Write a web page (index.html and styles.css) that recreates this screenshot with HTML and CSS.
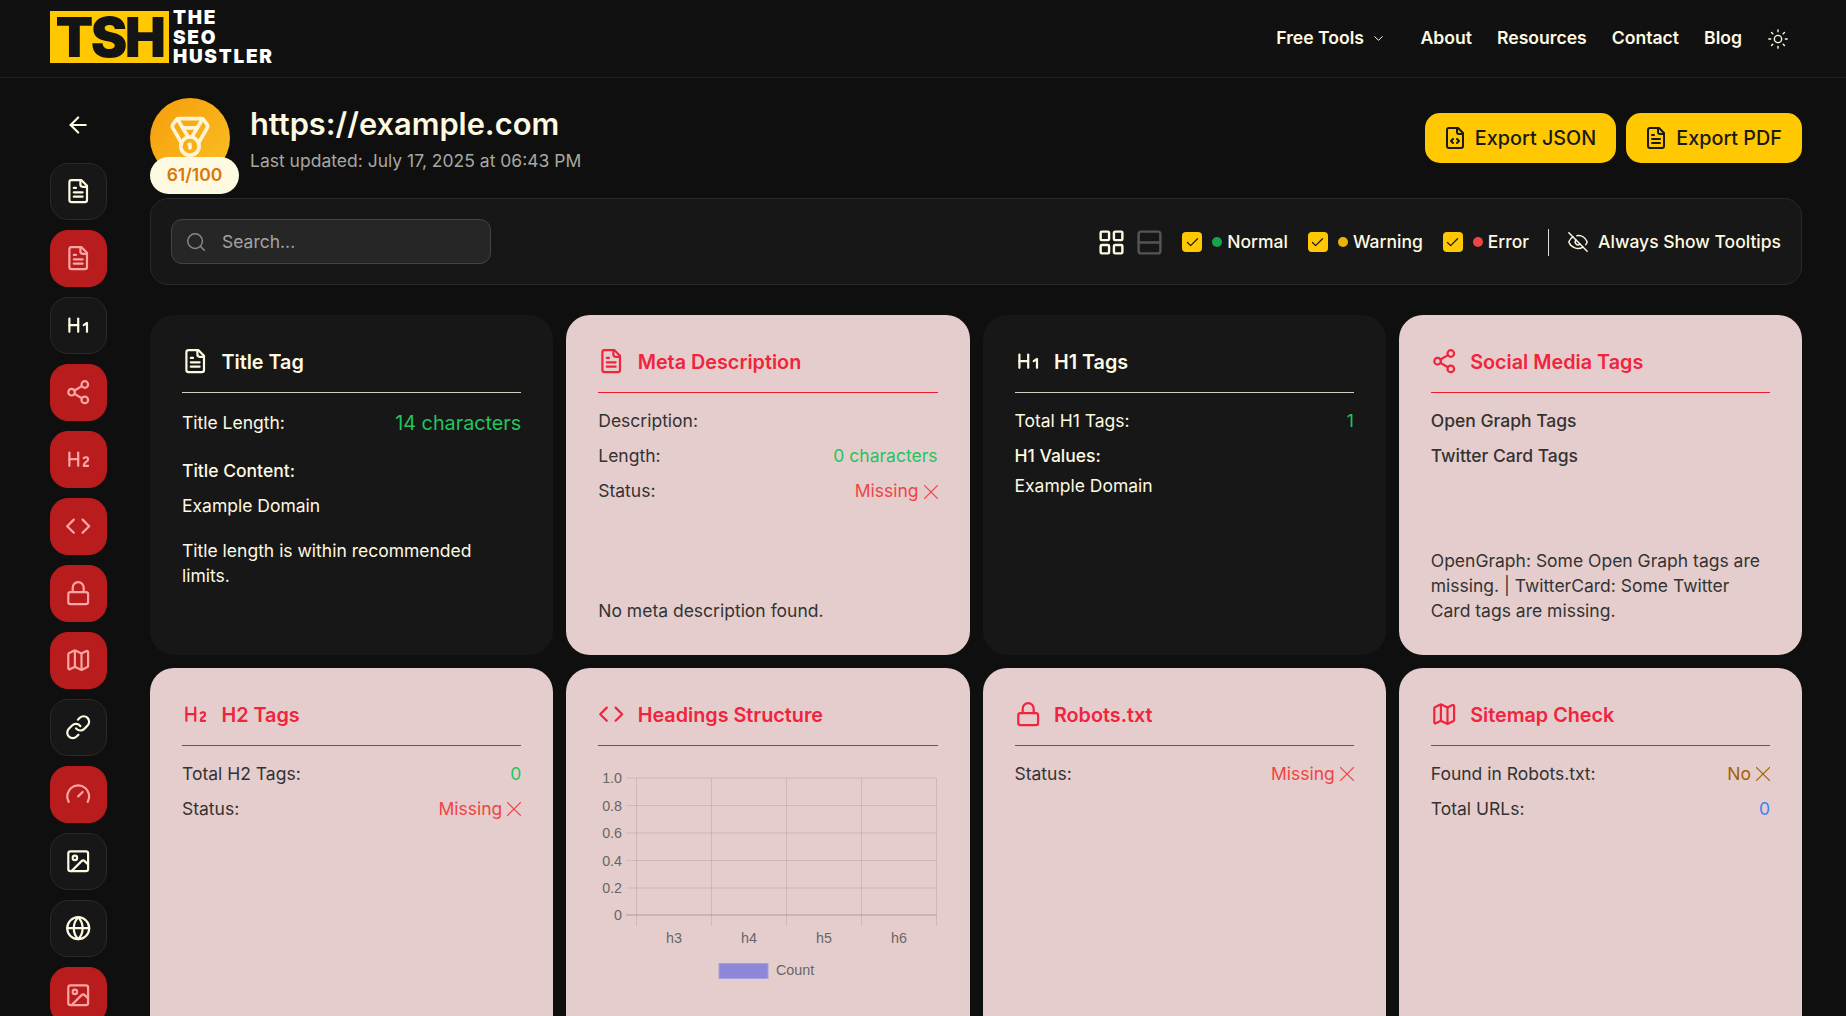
FILE: index.html
```html
<!DOCTYPE html>
<html lang="en">
<head>
  <meta charset="UTF-8">
  <meta name="viewport" content="width=device-width, initial-scale=1.0">
  <title>SEO Report - The SEO Hustler</title>
  <link rel="stylesheet" href="styles.css">
</head>
<body>
  <!-- Icon sprite -->
  <svg class="sprite" xmlns="http://www.w3.org/2000/svg">
    <symbol id="i-file" viewBox="0 0 24 24"><path d="M15 2H6a2 2 0 0 0-2 2v16a2 2 0 0 0 2 2h12a2 2 0 0 0 2-2V7Z"/><path d="M14 2v4a2 2 0 0 0 2 2h4"/><path d="M10 9H8"/><path d="M16 13H8"/><path d="M16 17H8"/></symbol>
    <symbol id="i-file-code" viewBox="0 0 24 24"><path d="M15 2H6a2 2 0 0 0-2 2v16a2 2 0 0 0 2 2h12a2 2 0 0 0 2-2V7Z"/><path d="M14 2v4a2 2 0 0 0 2 2h4"/><path d="m10 13-2 2 2 2"/><path d="m14 17 2-2-2-2"/></symbol>
    <symbol id="i-h1" viewBox="0 0 24 24"><path d="M4 12h8"/><path d="M4 18V6"/><path d="M12 18V6"/><path d="m17 12 3-2v8"/></symbol>
    <symbol id="i-h2" viewBox="0 0 24 24"><path d="M4 12h8"/><path d="M4 18V6"/><path d="M12 18V6"/><path d="M21 18h-4c0-4 4-3 4-6 0-1.5-2-2.5-4-1"/></symbol>
    <symbol id="i-share" viewBox="0 0 24 24"><circle cx="18" cy="5" r="3"/><circle cx="6" cy="12" r="3"/><circle cx="18" cy="19" r="3"/><path d="m8.59 13.51 6.83 3.98"/><path d="m15.41 6.51-6.82 3.98"/></symbol>
    <symbol id="i-code" viewBox="0 0 24 24"><path d="m16 18 6-6-6-6"/><path d="m8 6-6 6 6 6"/></symbol>
    <symbol id="i-lock" viewBox="0 0 24 24"><rect x="3" y="11" width="18" height="11" rx="2"/><path d="M7 11V7a5 5 0 0 1 10 0v4"/></symbol>
    <symbol id="i-map" viewBox="0 0 24 24"><path d="M14.106 5.553a2 2 0 0 0 1.788 0l3.659-1.83A1 1 0 0 1 21 4.619v12.764a1 1 0 0 1-.553.894l-4.553 2.277a2 2 0 0 1-1.788 0l-4.212-2.106a2 2 0 0 0-1.788 0l-3.659 1.83A1 1 0 0 1 3 19.381V6.618a1 1 0 0 1 .553-.894l4.553-2.277a2 2 0 0 1 1.788 0z"/><path d="M15 5.764v15"/><path d="M9 3.236v15"/></symbol>
    <symbol id="i-link" viewBox="0 0 24 24"><path d="M10 13a5 5 0 0 0 7.54.54l3-3a5 5 0 0 0-7.07-7.07l-1.72 1.71"/><path d="M14 11a5 5 0 0 0-7.54-.54l-3 3a5 5 0 0 0 7.07 7.07l1.71-1.71"/></symbol>
    <symbol id="i-gauge" viewBox="0 0 24 24"><path d="m12 14 4-4"/><path d="M3.34 19a10 10 0 1 1 17.32 0"/></symbol>
    <symbol id="i-image" viewBox="0 0 24 24"><rect x="3" y="3" width="18" height="18" rx="2"/><circle cx="9" cy="9" r="2"/><path d="m21 15-3.086-3.086a2 2 0 0 0-2.828 0L6 21"/></symbol>
    <symbol id="i-globe" viewBox="0 0 24 24"><circle cx="12" cy="12" r="10"/><path d="M12 2a14.5 14.5 0 0 0 0 20 14.5 14.5 0 0 0 0-20"/><path d="M2 12h20"/></symbol>
    <symbol id="i-x" viewBox="0 0 24 24"><path d="M23 1 1 23"/><path d="m1 1 22 22"/></symbol>
    <symbol id="i-check" viewBox="0 0 24 24"><path d="M20 6 9 17l-5-5"/></symbol>
  </svg>

  <!-- Header -->
  <header class="site-header">
    <a class="logo" href="#">
      <span class="logo-mark">TSH</span>
      <span class="logo-name">THE<br>SEO<br>HUSTLER</span>
    </a>
    <nav class="site-nav">
      <a class="nav-tools" href="#">Free Tools
        <svg class="icon chevron" viewBox="0 0 24 24"><path d="m6 9 6 6 6-6"/></svg>
      </a>
      <a href="#">About</a>
      <a href="#">Resources</a>
      <a href="#">Contact</a>
      <a href="#">Blog</a>
      <svg class="icon sun" viewBox="0 0 24 24"><circle cx="12" cy="12" r="4"/><path d="M12 2v2"/><path d="M12 20v2"/><path d="m4.93 4.93 1.41 1.41"/><path d="m17.66 17.66 1.41 1.41"/><path d="M2 12h2"/><path d="M20 12h2"/><path d="m6.34 17.66-1.41 1.41"/><path d="m19.07 4.93-1.41 1.41"/></svg>
    </nav>
  </header>

  <div class="page">
    <!-- Sidebar -->
    <aside class="sidebar">
      <svg class="icon back" viewBox="0 0 24 24"><path d="m12 19-7-7 7-7"/><path d="M19 12H5"/></svg>
      <a class="side-btn" href="#"><svg class="icon"><use href="#i-file"/></svg></a>
      <a class="side-btn fail" href="#"><svg class="icon"><use href="#i-file"/></svg></a>
      <a class="side-btn" href="#"><svg class="icon"><use href="#i-h1"/></svg></a>
      <a class="side-btn fail" href="#"><svg class="icon"><use href="#i-share"/></svg></a>
      <a class="side-btn fail" href="#"><svg class="icon"><use href="#i-h2"/></svg></a>
      <a class="side-btn fail" href="#"><svg class="icon"><use href="#i-code"/></svg></a>
      <a class="side-btn fail" href="#"><svg class="icon"><use href="#i-lock"/></svg></a>
      <a class="side-btn fail" href="#"><svg class="icon"><use href="#i-map"/></svg></a>
      <a class="side-btn" href="#"><svg class="icon"><use href="#i-link"/></svg></a>
      <a class="side-btn fail" href="#"><svg class="icon"><use href="#i-gauge"/></svg></a>
      <a class="side-btn" href="#"><svg class="icon"><use href="#i-image"/></svg></a>
      <a class="side-btn" href="#"><svg class="icon"><use href="#i-globe"/></svg></a>
      <a class="side-btn fail" href="#"><svg class="icon"><use href="#i-image"/></svg></a>
    </aside>

    <main class="report">
      <!-- Report title -->
      <section class="report-head">
        <div class="score">
          <div class="score-circle">
            <svg class="icon" viewBox="0 0 24 24"><path d="M7.21 15 2.66 7.14a2 2 0 0 1 .13-2.2L4.4 2.8A2 2 0 0 1 6 2h12a2 2 0 0 1 1.6.8l1.6 2.14a2 2 0 0 1 .14 2.2L16.79 15"/><path d="M11 12 5.12 2.2"/><path d="m13 12 5.88-9.8"/><path d="M8 7h8"/><circle cx="12" cy="17" r="5"/><path d="M12 18v-2h-.5"/></svg>
          </div>
          <span class="score-pill">61/100</span>
        </div>
        <div class="report-title">
          <h1>https://example.com</h1>
          <p>Last updated: July 17, 2025 at 06:43 PM</p>
        </div>
        <div class="export">
          <button class="export-btn"><svg class="icon"><use href="#i-file-code"/></svg>Export JSON</button>
          <button class="export-btn"><svg class="icon"><use href="#i-file"/></svg>Export PDF</button>
        </div>
      </section>

      <!-- Toolbar -->
      <section class="toolbar">
        <label class="search">
          <svg class="icon" viewBox="0 0 24 24"><circle cx="11" cy="11" r="8"/><path d="m21 21-4.3-4.3"/></svg>
          <input type="text" placeholder="Search...">
        </label>
        <div class="controls">
          <svg class="icon view" viewBox="0 0 24 24"><rect x="3" y="3" width="7" height="7" rx="1"/><rect x="14" y="3" width="7" height="7" rx="1"/><rect x="14" y="14" width="7" height="7" rx="1"/><rect x="3" y="14" width="7" height="7" rx="1"/></svg>
          <svg class="icon view off" viewBox="0 0 24 24"><rect x="3" y="3" width="18" height="18" rx="2"/><path d="M3 12h18"/></svg>
          <span class="filter first"><span class="check"><svg class="icon"><use href="#i-check"/></svg></span><i class="dot green"></i>Normal</span>
          <span class="filter"><span class="check"><svg class="icon"><use href="#i-check"/></svg></span><i class="dot amber"></i>Warning</span>
          <span class="filter"><span class="check"><svg class="icon"><use href="#i-check"/></svg></span><i class="dot red"></i>Error</span>
          <span class="sep"></span>
          <span class="tooltips">
            <svg class="icon" viewBox="0 0 24 24"><path d="M10.733 5.076a10.744 10.744 0 0 1 11.205 6.575 1 1 0 0 1 0 .696 10.747 10.747 0 0 1-1.444 2.49"/><path d="M14.084 14.158a3 3 0 0 1-4.242-4.242"/><path d="M17.479 17.499a10.75 10.75 0 0 1-15.417-5.151 1 1 0 0 1 0-.696 10.75 10.75 0 0 1 4.446-5.143"/><path d="m2 2 20 20"/></svg>
            Always Show Tooltips
          </span>
        </div>
      </section>

      <!-- Cards -->
      <section class="cards">
        <article class="card">
          <h2 class="card-title"><svg class="icon"><use href="#i-file"/></svg>Title Tag</h2>
          <div class="row big"><span>Title Length:</span><span class="val ok">14 characters</span></div>
          <p class="strong title-label">Title Content:</p>
          <p class="title-value">Example Domain</p>
          <p class="note-flow">Title length is within recommended limits.</p>
        </article>

        <article class="card fail">
          <h2 class="card-title"><svg class="icon"><use href="#i-file"/></svg>Meta Description</h2>
          <div class="row"><span>Description:</span></div>
          <div class="row"><span>Length:</span><span class="val ok">0 characters</span></div>
          <div class="row"><span>Status:</span><span class="val bad">Missing <svg class="icon"><use href="#i-x"/></svg></span></div>
          <p class="note">No meta description found.</p>
        </article>

        <article class="card">
          <h2 class="card-title"><svg class="icon"><use href="#i-h1"/></svg>H1 Tags</h2>
          <div class="row"><span>Total H1 Tags:</span><span class="val ok">1</span></div>
          <div class="row"><span class="strong">H1 Values:</span></div>
          <p class="h1-value">Example Domain</p>
        </article>

        <article class="card fail">
          <h2 class="card-title"><svg class="icon"><use href="#i-share"/></svg>Social Media Tags</h2>
          <div class="row"><span class="strong">Open Graph Tags</span></div>
          <div class="row"><span class="strong">Twitter Card Tags</span></div>
          <p class="note">OpenGraph: Some Open Graph tags are missing. | TwitterCard: Some Twitter Card tags are missing.</p>
        </article>

        <article class="card fail">
          <h2 class="card-title"><svg class="icon"><use href="#i-h2"/></svg>H2 Tags</h2>
          <div class="row"><span>Total H2 Tags:</span><span class="val ok">0</span></div>
          <div class="row"><span>Status:</span><span class="val bad">Missing <svg class="icon"><use href="#i-x"/></svg></span></div>
        </article>

        <article class="card fail">
          <h2 class="card-title"><svg class="icon"><use href="#i-code"/></svg>Headings Structure</h2>
          <svg class="chart" viewBox="0 0 339 225">
            <g class="grid">
              <path d="M38.5 13H338.5M28 40.5H338.5M28 68H338.5M28 95.5H338.5M28 123H338.5M28 13H38.5"/>
              <path d="M38.5 13V161M113.5 13V161M188.5 13V161M263.5 13V161M338.5 13V161"/>
            </g>
            <path class="zero" d="M28 150H338.5"/>
            <g class="labels">
              <text x="24" y="18" text-anchor="end">1.0</text>
              <text x="24" y="45.5" text-anchor="end">0.8</text>
              <text x="24" y="73" text-anchor="end">0.6</text>
              <text x="24" y="100.5" text-anchor="end">0.4</text>
              <text x="24" y="128" text-anchor="end">0.2</text>
              <text x="24" y="155" text-anchor="end">0</text>
              <text x="76" y="178" text-anchor="middle">h3</text>
              <text x="151" y="178" text-anchor="middle">h4</text>
              <text x="226" y="178" text-anchor="middle">h5</text>
              <text x="301" y="178" text-anchor="middle">h6</text>
              <text x="178" y="210">Count</text>
            </g>
            <rect class="legend" x="121" y="198.5" width="49" height="15"/>
          </svg>
        </article>

        <article class="card fail">
          <h2 class="card-title"><svg class="icon"><use href="#i-lock"/></svg>Robots.txt</h2>
          <div class="row"><span>Status:</span><span class="val bad">Missing <svg class="icon"><use href="#i-x"/></svg></span></div>
        </article>

        <article class="card fail">
          <h2 class="card-title"><svg class="icon"><use href="#i-map"/></svg>Sitemap Check</h2>
          <div class="row"><span>Found in Robots.txt:</span><span class="val warn">No <svg class="icon"><use href="#i-x"/></svg></span></div>
          <div class="row"><span>Total URLs:</span><span class="val info">0</span></div>
        </article>
      </section>
    </main>
  </div>
</body>
</html>
```

FILE: styles.css
```css
/* Base */
html, body {
  height: 1016px;
  overflow: hidden;
}

body {
  margin: 0;
  background-color: #0f0f0f;
  color: #fef9e1;
  font-family: 'Inter', 'Liberation Sans', sans-serif;
  font-size: 17.5px;
  line-height: 26.4px;
}

a {
  color: inherit;
  text-decoration: none;
}

h1, h2, p {
  margin: 0;
}

.sprite {
  display: none;
}

.icon {
  width: 26.4px;
  height: 26.4px;
  flex-shrink: 0;
  fill: none;
  stroke: currentColor;
  stroke-width: 2;
  stroke-linecap: round;
  stroke-linejoin: round;
}

/* Header */
.site-header {
  height: 77px;
  box-sizing: content-box;
  display: flex;
  align-items: center;
  justify-content: space-between;
  padding: 0 56px 0 50px;
  border-bottom: 1px solid #222;
  background-color: #111;
}

.logo {
  display: flex;
  gap: 4px;
  align-self: flex-start;
  margin-top: 11px;
}

.logo-mark {
  width: 119px;
  height: 52px;
  display: flex;
  align-items: center;
  justify-content: center;
  background-color: #ffc800;
  color: #141414;
  font-size: 55px;
  font-weight: 900;
  letter-spacing: -2.5px;
  line-height: 52px;
}

.logo-name {
  color: #fff;
  font-size: 19px;
  font-weight: 900;
  letter-spacing: 1.7px;
  line-height: 19.5px;
  margin-top: -3px;
}

.site-nav {
  display: flex;
  align-items: center;
  gap: 25px;
  font-size: 17.6px;
  font-weight: 600;
}

.nav-tools {
  display: flex;
  align-items: center;
  gap: 7px;
  margin-right: 9.5px;
}

.chevron {
  width: 15px;
  height: 15px;
  stroke-width: 1.6;
}

.sun {
  width: 22px;
  height: 22px;
  stroke-width: 1.5;
  margin-right: 1px;
}

/* Layout */
.page {
  display: flex;
}

.sidebar {
  width: 57px;
  flex-shrink: 0;
  display: flex;
  flex-direction: column;
  gap: 10px;
  padding: 34px 43px 0 50px;
}

.back {
  align-self: center;
  height: 26px;
  margin-bottom: 15px;
}

.side-btn {
  width: 57px;
  height: 57px;
  flex-shrink: 0;
  box-sizing: border-box;
  display: flex;
  align-items: center;
  justify-content: center;
  border: 1px solid #2a2a2a;
  border-radius: 18px;
  background-color: #171717;
}

.side-btn.fail {
  border-color: #b91c1c;
  background-color: #b91c1c;
  color: #fca5a5;
}

.report {
  flex: 1;
  min-width: 0;
  padding: 20px 44px 0 0;
}

/* Report title */
.report-head {
  height: 100px;
  display: flex;
  gap: 20px;
}

.score {
  position: relative;
  width: 80px;
}

.score-circle {
  width: 80px;
  height: 80px;
  display: flex;
  align-items: center;
  justify-content: center;
  border-radius: 50%;
  background: linear-gradient(135deg, #f59e0b, #fbbf24);
  color: #fff5d6;
}

.score-circle .icon {
  width: 44px;
  height: 44px;
  margin-bottom: 3px;
}

.score-pill {
  position: absolute;
  left: 0;
  top: 59px;
  width: 89px;
  height: 37px;
  display: flex;
  align-items: center;
  justify-content: center;
  border-radius: 19px;
  background-color: #fef9e1;
  color: #d97706;
  font-weight: 600;
}

.report-title h1 {
  margin-top: 6px;
  font-size: 30.8px;
  line-height: 40px;
  font-weight: 600;
}

.report-title p {
  margin-top: 4px;
  color: #a8a8a0;
}

.export {
  display: flex;
  gap: 10px;
  margin-left: auto;
  margin-top: 15px;
  align-self: flex-start;
}

.export-btn {
  height: 50px;
  display: flex;
  align-items: center;
  gap: 8px;
  padding: 0 20px 0 18px;
  border: none;
  border-radius: 15px;
  background-color: #ffc800;
  color: #1a1a1a;
  font-family: inherit;
  font-size: 19.8px;
  font-weight: 500;
}

.export-btn .icon {
  width: 24px;
  height: 24px;
}

/* Toolbar */
.toolbar {
  height: 87px;
  box-sizing: border-box;
  display: flex;
  align-items: center;
  justify-content: space-between;
  padding: 0 20px;
  border: 1px solid #2a2a2a;
  border-radius: 18px;
  background-color: #171717;
}

.search {
  width: 320px;
  height: 45px;
  box-sizing: border-box;
  display: flex;
  align-items: center;
  gap: 15px;
  padding: 0 13px;
  border: 1px solid #444;
  border-radius: 11px;
  background-color: #262626;
  color: #a3a3a3;
}

.search .icon {
  width: 22px;
  height: 22px;
  stroke-width: 1.6;
  color: #8a8a8a;
}

.search input {
  flex: 1;
  min-width: 0;
  padding: 0;
  border: none;
  outline: none;
  background: none;
  color: inherit;
  font-family: inherit;
  font-size: 17.5px;
}

.search input::placeholder {
  color: #a3a3a3;
  opacity: 1;
}

.controls {
  display: flex;
  align-items: center;
  margin-top: 1px;
}

.view {
  width: 29px;
  height: 29px;
  margin-right: 9px;
}

.view.off {
  color: #555;
}

.filter {
  display: flex;
  align-items: center;
  margin-left: 20px;
  font-weight: 500;
}

.filter.first {
  margin-left: 9px;
}

.check {
  width: 20px;
  height: 20px;
  display: flex;
  align-items: center;
  justify-content: center;
  border-radius: 4px;
  background-color: #ffc800;
  color: #1a1a1a;
}

.check .icon {
  width: 15px;
  height: 15px;
}

.dot {
  width: 10px;
  height: 10px;
  margin: 0 5px 0 10px;
  border-radius: 50%;
}

.dot.green { background-color: #16a34a; }
.dot.amber { background-color: #eab308; }
.dot.red { background-color: #ef4444; }

.sep {
  width: 1px;
  height: 27px;
  margin: 0 18px 0 19px;
  background-color: #ddd;
}

.tooltips {
  display: flex;
  align-items: center;
  gap: 9px;
  font-weight: 500;
}

.tooltips .icon {
  width: 22px;
  height: 22px;
  stroke-width: 1.6;
}

/* Cards */
.cards {
  display: grid;
  grid-template-columns: repeat(4, 1fr);
  grid-auto-rows: 340px 420px;
  gap: 13px;
  margin-top: 30px;
}

.card {
  display: flex;
  flex-direction: column;
  padding: 32px;
  border-radius: 24px;
  background-color: #171717;
}

.card.fail {
  background-color: #e6cdcd;
  color: #333;
}

.card-title {
  height: 29px;
  display: flex;
  align-items: center;
  gap: 13px;
  padding-bottom: 16px;
  margin-bottom: 15px;
  border-bottom: 1px solid #d4d0c0;
  font-size: 19.8px;
  line-height: 28px;
  font-weight: 600;
}

.fail .card-title {
  color: #f0243c;
  border-bottom-color: #ec1c2c;
}

.row {
  display: flex;
  align-items: center;
  justify-content: space-between;
  min-height: 26.4px;
  margin-bottom: 8.8px;
}

.row.big {
  min-height: 30px;
  margin-bottom: 20px;
}

.big .val {
  font-size: 19.8px;
}

.val {
  display: flex;
  align-items: center;
  gap: 5px;
}

.val .icon {
  width: 14px;
  height: 14px;
  stroke-width: 2.2;
}

.ok { color: #22c55e; }
.bad { color: #ef4444; }
.warn { color: #a16207; }
.info { color: #3b82f6; }

.strong {
  font-weight: 500;
}

.title-value {
  margin-top: 8.8px;
}

.h1-value {
  margin-top: -5.8px;
}

.note-flow {
  margin-top: 18px;
  line-height: 25px;
}

.note {
  margin-top: auto;
  line-height: 25px;
}

/* Chart */
.chart {
  width: 339px;
  height: 225px;
  margin-top: 4px;
}

.grid path {
  fill: none;
  stroke: rgba(0, 0, 0, 0.1);
  stroke-width: 1;
}

.zero {
  fill: none;
  stroke: rgba(0, 0, 0, 0.25);
}

.labels text {
  fill: #666;
  font-family: 'Liberation Sans', sans-serif;
  font-size: 14.3px;
}

.legend {
  fill: #8c87d9;
  stroke: #a3a0e0;
}
```
